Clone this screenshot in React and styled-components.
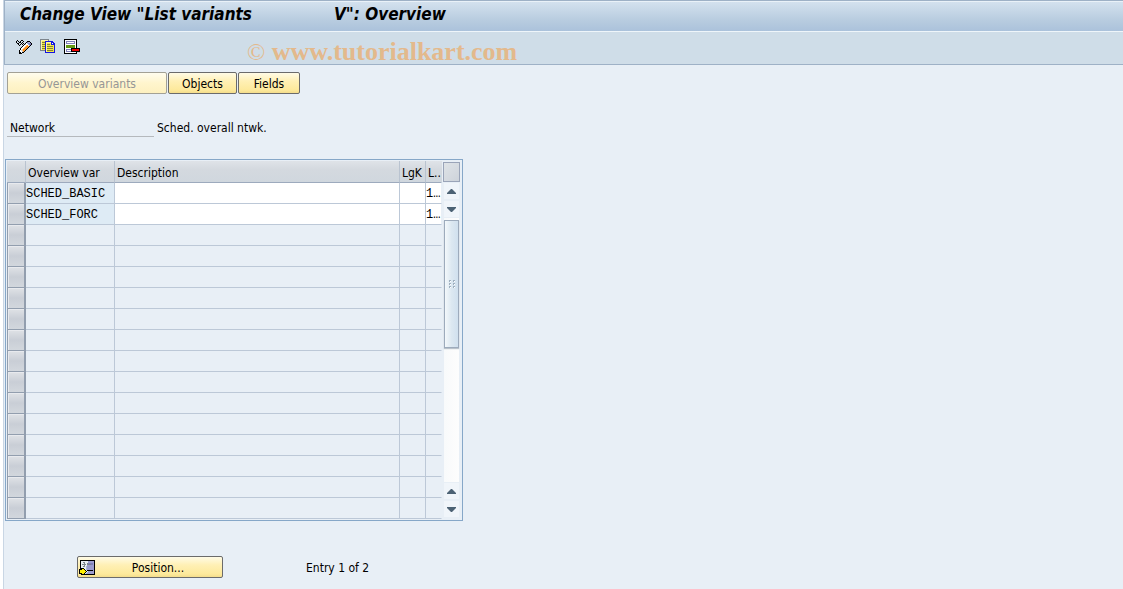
import React from "react";
import styled, { createGlobalStyle } from "styled-components";

const GlobalStyle = createGlobalStyle`
  *, *::before, *::after { box-sizing: border-box; }
  body {
    margin: 0;
    background: #fff;
    color: #000;
    font: 12px/16px "DejaVu Sans Condensed", "Noto Sans", sans-serif;
  }
  button, input { font: inherit; color: inherit; }
`;

const Window = styled.div`
  min-height: 100vh;
  margin-left: 3px;
  border-left: 1px solid #c9d6e4;
  background: #e8eff6;
`;

const Header = styled.header`
  position: relative;
  border: solid #9eb1c6;
  border-width: 1px 0 1px 1px;
`;

const TitleBar = styled.div`
  height: 30px;
  padding: 2px 15px;
  border-top: 1px solid #e9f1f8;
  background: linear-gradient(#d3e1ee, #b9cde0 60%, #abc2db);
`;

const Title = styled.h1`
  display: flex;
  gap: 82px;
  margin: 0;
  font-size: 17px;
  line-height: 20px;
  font-weight: bold;
  font-style: italic;
  white-space: nowrap;
`;

const Toolbar = styled.div`
  display: flex;
  align-items: center;
  gap: 8px;
  height: 33px;
  padding: 0 11px 2px;
  border-top: 1px solid #eef5fa;
  background: #cfdde8;
`;

const IconButton = styled.button`
  display: flex;
  padding: 0;
  border: 0;
  background: none;
`;

const Watermark = styled.div`
  position: absolute;
  left: 242px;
  top: 36px;
  color: #e3b98c;
  font: bold 26px/30px "Liberation Serif", serif;
  white-space: nowrap;
`;

const Thin = styled.span`
  font-size: 24px;
  font-weight: normal;
`;

const Content = styled.main`
  padding: 7px 1px 11px;
`;

const ButtonRow = styled.div`
  display: flex;
  gap: 1px;
  padding-left: 2px;
`;

const PushButton = styled.button`
  width: ${(p) => p.$width}px;
  height: 22px;
  padding: 2px 0 0;
  border: 1px solid #6b6b6b;
  border-radius: 2px;
  background: linear-gradient(#fffbe6, #fff0b5 40%, #fde99b 85%, #f4dd8c);
  text-align: center;
  &:disabled {
    border-color: #a3a195;
    background: linear-gradient(#fffdee, #fff5cd 50%, #fdf0c0);
    color: #969696;
  }
`;

const PositionButton = styled(PushButton)`
  display: grid;
  grid-template-columns: 16px 1fr;
  align-items: center;
  padding: 1px 1px 0;
`;

const KeyLine = styled.div`
  display: flex;
  gap: 3px;
  margin: 24px 0 22px;
  padding-left: 2px;
`;

const KeyLabel = styled.span`
  width: 147px;
  height: 19px;
  padding: 2px 3px 0;
  border-bottom: 1px solid #b5b9bd;
`;

const KeyValue = styled.span`
  padding-top: 2px;
`;

const TableControl = styled.section`
  display: flex;
  gap: 1px;
  width: 458px;
  padding: 1px 2px 1px 1px;
  border: 1px solid #86a7c8;
`;

const GridArea = styled.div`
  flex: 1;
  min-width: 0;
`;

const Grid = styled.table`
  width: 100%;
  table-layout: fixed;
  border-collapse: separate;
  border-spacing: 0;
`;

const HeadCell = styled.th`
  height: 22px;
  padding: 2px 2px 0;
  border-right: 1px solid ${(p) => (p.$last ? "transparent" : "#b9c3d0")};
  border-bottom: 1px solid #9daabd;
  background: linear-gradient(#dfe3e8, #d4d9df 40%, #d0d7de);
  font-weight: normal;
  text-align: left;
  white-space: nowrap;
  overflow: hidden;
`;

const Cell = styled.td`
  height: 21px;
  padding: 0;
  border-right: 1px solid ${(p) => (p.$last ? "transparent" : "#bcc8d7")};
  border-bottom: 1px solid #bcc8d7;
  background: ${(p) => p.$fill || "#e8eff6"};
  background-clip: padding-box;
  line-height: 16px;
  white-space: nowrap;
`;

const CellText = styled.span`
  font: 12px/16px "Liberation Mono", monospace;
`;

const SelectorCell = styled.td`
  height: 21px;
  padding: 0;
`;

const RowSelector = styled.button`
  display: block;
  width: 100%;
  height: 21px;
  padding: 0;
  border: solid #929eae;
  border-width: 0 2px 1px 1px;
  background: linear-gradient(#dfe2e6, #c9ced6 50%, #d2d7dd);
  box-shadow: inset 1px 1px #e8eaee;
`;

const CellInput = styled.input`
  display: block;
  width: 100%;
  height: 18px;
  padding: 0;
  border: 0;
  background: transparent;
  outline: 0;
`;

const ScrollColumn = styled.div`
  display: flex;
  flex-direction: column;
  align-items: center;
  width: 17px;
  padding: 1px 0;
`;

const ConfigButton = styled.button`
  width: 17px;
  height: 20px;
  padding: 0;
  border: 1px solid #9aa4b8;
  background: linear-gradient(135deg, #dfe3e7, #cdd3da);
`;

const ScrollButton = styled.button`
  display: flex;
  align-items: center;
  justify-content: center;
  width: 15px;
  height: 16px;
  margin: 1px 0;
  padding: 0;
  border: 0;
  background: #f0f5fa;
`;

const Track = styled.div`
  flex: 1;
  width: 15px;
  padding-top: 2px;
  background: linear-gradient(90deg, #f8fafb, #fdfdfd);
`;

const Thumb = styled.div`
  display: flex;
  align-items: center;
  justify-content: center;
  height: 128px;
  border: 1px solid #9dabbc;
  background: linear-gradient(90deg, #f3f8fb, #dce8f1 50%, #d0e0ee);
  box-shadow: 0 1px 1px #b9c2cb;
`;

const Footer = styled.footer`
  display: flex;
  align-items: center;
  gap: 83px;
  margin-top: 35px;
  padding-left: 72px;
`;

const EntryCount = styled.span`
  padding-top: 1px;
`;

const Pixels = ({ rows, colors, size = 16 }) => (
  <svg width={size} height={size} viewBox={`0 0 ${size} ${size}`} shapeRendering="crispEdges" aria-hidden="true">
    {rows.flatMap((row, y) =>
      [...row].map((c, x) =>
        colors[c] ? <rect key={`${x}-${y}`} x={x} y={y} width="1" height="1" fill={colors[c]} /> : null
      )
    )}
  </svg>
);

const palette = {
  k: "#000000", w: "#ffffff", g: "#7d858c", y: "#f2e64a", l: "#fbf6a8",
  o: "#f29a38", p: "#f9c98c", b: "#1414e0", v: "#9c9cce", n: "#5f9a10",
  r: "#f00000", s: "#c0d0dc", m: "#858531", q: "#8080b8", t: "#e9edf2",
  e: "#ffee00", a: "#a8b8d8", h: "#ff8c1a",
};

const changeIcon = [
  "................",
  ".k...kk.........",
  "k.k.k..k...kkk..",
  "k..kk.k...kqaak.",
  ".kk..k.k.kwaqqqk",
  "..k.k.k.kswwaqqk",
  "...k...kwwphwak.",
  "......kwwphhok..",
  ".....kwwphhok...",
  "....kwwphhok....",
  "....kwphhok.....",
  "...kwsphok......",
  "...kwwsok.......",
  "...kkwkk........",
  "...kkk..........",
];
const copyIcon = [
  "ggggggggg.......",
  "glllllllg.......",
  "glyyybbbbbbbb...",
  "glmmmblllllbbb..",
  "glyyyblyyyybwbb.",
  "glmmmblmmmybbbb.",
  "glyyyblyyyyyyyb.",
  "glmmmblmmmmmmyb.",
  "glyyyblyyyyyyyb.",
  "glmmmblmmmmmmyb.",
  "glyyyblyyyyyyyb.",
  "gggggblmmmmmmyb.",
  ".....blyyyyyyyb.",
  ".....bbbbbbbbbb.",
];
const deleteIcon = [
  "kkkkkkkkkkkkk...",
  "kwwwwwwwwwwwk...",
  "kwqqqqqqqqqwk...",
  "kwqwwwwwwwqwk...",
  "kwqqqqqqqqqwk...",
  "kwwwwwwwwwwwk...",
  "kwnnnnnnnnnwk...",
  "kwnnmnnmnnnwk...",
  "kwnnnnnnnnnwk...",
  "kwwwwwwkkkkkkkkk",
  "kwqqqqqkrrrrrrrk",
  "kwqwwwwkrrrrrrrk",
  "kwqqqqqkkkkkkkkk",
  "kwwwwwwwwwwwk...",
  "kkkkkkkkkkkkk...",
];
const positionIcon = [
  ".kkkkkkkkkkkkkkk",
  ".ktttttttvvvvvvk",
  ".kttggtttvvvvvvk",
  ".ktttgttgqqqqqvk",
  ".ktggggtggggqqvk",
  ".ktttgttvvvvvvvk",
  ".kttggtavvvvvvvk",
  ".ktttttavvvvvvvk",
  ".kkkkttavvvvvvvk",
  "kkkeektavvvvvvvk",
  "keeeeektkkkkkkvk",
  "keeeeeektvvvvvvk",
  "keeeeektavvvvvvk",
  "kkkeektavvvvvvvk",
  "..kkkkkkkkkkkkkk",
];

const Arrow = ({ down }) => (
  <svg width="9" height="5" viewBox="0 0 9 5" aria-hidden="true">
    <path d={down ? "M0 0h9v1L5 5H4L0 1z" : "M0 5h9V4L5 0H4L0 4z"} fill="#4c6274" />
  </svg>
);

const Grip = () => (
  <svg width="6" height="8" viewBox="0 0 6 8" shapeRendering="crispEdges" aria-hidden="true">
    {[0, 3, 6].flatMap((y) => [0, 4].map((x) => (
      <g key={`${x}-${y}`}>
        <rect x={x} y={y} width="2" height="2" fill="#9fb0bf" />
        <rect x={x + 1} y={y + 1} width="1" height="1" fill="#fff" />
      </g>
    )))}
  </svg>
);

const variants = ["SCHED_BASIC", "SCHED_FORC"];
const rowCount = 16;

const Row = ({ index, name }) => (
  <tr>
    <SelectorCell><RowSelector type="button" aria-label={`Select row ${index + 1}`} /></SelectorCell>
    <Cell $fill={name && "#deebf5"}><CellText>{name}</CellText></Cell>
    <Cell $fill={name && "#fff"}>{name && <CellInput aria-label={`Description of ${name}`} />}</Cell>
    <Cell $fill={name && "#fff"}>{name && <CellInput aria-label={`LgK of ${name}`} />}</Cell>
    <Cell $fill={name && "#fff"} $last>{name && <CellText>1…</CellText>}</Cell>
  </tr>
);

export default function App() {
  return (
    <>
      <GlobalStyle />
      <Window>
        <Header>
          <TitleBar>
            <Title><span>Change View "List variants</span><span>V": Overview</span></Title>
          </TitleBar>
          <Toolbar>
            <IconButton type="button" aria-label="Display / Change"><Pixels rows={changeIcon} colors={palette} /></IconButton>
            <IconButton type="button" aria-label="Copy As"><Pixels rows={copyIcon} colors={palette} /></IconButton>
            <IconButton type="button" aria-label="Delete"><Pixels rows={deleteIcon} colors={palette} /></IconButton>
          </Toolbar>
          <Watermark><Thin>©</Thin> www.tutorialkart.com</Watermark>
        </Header>
        <Content>
          <ButtonRow>
            <PushButton type="button" $width={160} disabled>Overview variants</PushButton>
            <PushButton type="button" $width={69}>Objects</PushButton>
            <PushButton type="button" $width={62}>Fields</PushButton>
          </ButtonRow>
          <KeyLine>
            <KeyLabel>Network</KeyLabel>
            <KeyValue>Sched. overall ntwk.</KeyValue>
          </KeyLine>
          <TableControl>
            <GridArea>
              <Grid>
                <colgroup>
                  <col width="19" /><col width="89" /><col width="285" /><col width="26" /><col width="16" />
                </colgroup>
                <thead>
                  <tr>
                    <HeadCell aria-label="Select all" />
                    <HeadCell>Overview var</HeadCell>
                    <HeadCell>Description</HeadCell>
                    <HeadCell>LgK</HeadCell>
                    <HeadCell $last>L..</HeadCell>
                  </tr>
                </thead>
                <tbody>
                  {Array.from({ length: rowCount }, (_, i) => <Row key={i} index={i} name={variants[i]} />)}
                </tbody>
              </Grid>
            </GridArea>
            <ScrollColumn>
              <ConfigButton type="button" aria-label="Configuration" />
              <ScrollButton type="button" aria-label="Previous row"><Arrow /></ScrollButton>
              <ScrollButton type="button" aria-label="Next row"><Arrow down /></ScrollButton>
              <Track><Thumb><Grip /></Thumb></Track>
              <ScrollButton type="button" aria-label="Previous page"><Arrow /></ScrollButton>
              <ScrollButton type="button" aria-label="Next page"><Arrow down /></ScrollButton>
            </ScrollColumn>
          </TableControl>
          <Footer>
            <PositionButton type="button" $width={146}>
              <Pixels rows={positionIcon} colors={palette} />
              <span>Position...</span>
            </PositionButton>
            <EntryCount>Entry 1 of 2</EntryCount>
          </Footer>
        </Content>
      </Window>
    </>
  );
}
